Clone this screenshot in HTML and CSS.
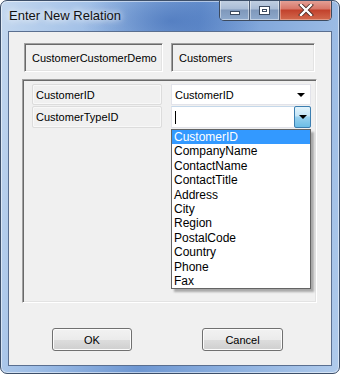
FILE: index.html
```html
<!DOCTYPE html>
<html>
<head>
    <meta charset="utf-8">
    <title>Enter New Relation</title>
    <link rel="stylesheet" href="styles.css">
</head>
<body>
    <div class="window">
        <div class="titlebar">
            <span class="title">Enter New Relation</span>
            <div class="caption-buttons">
                <div class="cap-btn cap-min"><span class="min-glyph"></span></div>
                <div class="cap-btn cap-max"><span class="max-glyph"></span></div>
                <div class="cap-btn cap-close">
                    <svg width="16" height="12" viewBox="0 0 16 12">
                        <path d="M3 1 L13 11 M13 1 L3 11" stroke="#4a2a24" stroke-width="4" stroke-linecap="square"/>
                        <path d="M3 1 L13 11 M13 1 L3 11" stroke="#fff" stroke-width="2.4" stroke-linecap="square"/>
                    </svg>
                </div>
            </div>
        </div>

        <div class="client">
            <!-- tabellen -->
            <div class="header">
                <div class="table-box box-left">CustomerCustomerDemo</div>
                <div class="table-box box-right">Customers</div>
            </div>

            <!-- kolommen -->
            <div class="panel">
                <div class="row">
                    <div class="cell-label">CustomerID</div>
                    <div class="combo">
                        <span>CustomerID</span>
                        <span class="arrow"></span>
                    </div>
                </div>
                <div class="row">
                    <div class="cell-label">CustomerTypeID</div>
                    <div class="combo combo-open">
                        <span class="caret"></span>
                        <span class="drop-btn"><span class="arrow"></span></span>
                    </div>
                </div>

                <ul class="dropdown">
                    <li class="selected">CustomerID</li>
                    <li>CompanyName</li>
                    <li>ContactName</li>
                    <li>ContactTitle</li>
                    <li>Address</li>
                    <li>City</li>
                    <li>Region</li>
                    <li>PostalCode</li>
                    <li>Country</li>
                    <li>Phone</li>
                    <li>Fax</li>
                </ul>
            </div>

            <div class="footer">
                <button class="btn btn-ok">OK</button>
                <button class="btn btn-cancel">Cancel</button>
            </div>
        </div>
    </div>
</body>
</html>
```

FILE: styles.css
```css
* {
    box-sizing: border-box;
}
body {
    margin: 0;
    width: 340px;
    height: 374px;
    background: #fff;
    font-family: "Liberation Sans", Arial, sans-serif;
    font-size: 11px;
    color: #000;
}
.window {
    width: 340px;
    height: 374px;
    display: flex;
    flex-direction: column;
    border: 1px solid #3d4f69;
    border-radius: 7px;
    background:
        radial-gradient(ellipse 90px 40px at 170px 20px, rgba(60, 105, 180, 0.6), rgba(60, 105, 180, 0)),
        linear-gradient(100deg, #c4d8ef 0%, #9dbde6 25%, #6e97d2 50%, #8fb2e0 75%, #b0cbec 100%);
    box-shadow: inset 0 0 0 1px rgba(255, 255, 255, 0.5);
    overflow: hidden;
}
.titlebar {
    height: 30px;
    display: flex;
    justify-content: space-between;
    align-items: flex-start;
    padding-left: 8px;
    padding-right: 7px;
}
.title {
    font-size: 13px;
    line-height: 13px;
    margin-top: 8px;
    color: #111;
    text-shadow: 0 0 6px #fff, 0 0 10px rgba(255, 255, 255, 0.8);
}
.caption-buttons {
    display: flex;
    height: 21px;
    margin-top: -1px;
    border: 1px solid #3c4a5e;
    border-top: none;
    border-radius: 0 0 5px 5px;
    overflow: hidden;
}
.cap-btn {
    height: 20px;
    display: flex;
    align-items: center;
    justify-content: center;
    border-right: 1px solid #4d5d75;
}
.cap-min, .cap-max {
    width: 30px;
    background: linear-gradient(#c2d0e2 0%, #a9bcd6 45%, #7f98bb 50%, #8ea9cc 100%);
    box-shadow: inset 0 0 0 1px rgba(255, 255, 255, 0.45);
}
.cap-close {
    width: 51px;
    border-right: none;
    background: linear-gradient(#e5a49a 0%, #d87668 45%, #c2412c 50%, #d26a4e 100%);
    box-shadow: inset 0 0 0 1px rgba(255, 220, 210, 0.4);
}
.min-glyph {
    width: 10px;
    height: 4px;
    margin-top: 6px;
    background: #fff;
    border: 1px solid #3b4a60;
}
.max-glyph {
    width: 11px;
    height: 9px;
    background: #fff;
    border: 1px solid #3b4a60;
    box-shadow: inset 0 0 0 2px #fff, inset 0 0 0 3px #3b4a60;
}
.client {
    flex: 1;
    margin: 0 7px 7px 7px;
    background: #f0f0f0;
    border: 1px solid #5a6f90;
    display: flex;
    flex-direction: column;
}
.header {
    display: flex;
    gap: 8px;
    margin-top: 11px;
    margin-left: 15px;
}
.table-box {
    height: 29px;
    display: flex;
    align-items: center;
    padding-left: 7px;
    border: 1px solid;
    border-color: #a0a0a0 #fff #fff #a0a0a0;
    box-shadow: inset 1px 1px 0 #696969, inset -1px -1px 0 #e3e3e3;
}
.box-left {
    width: 139px;
}
.box-right {
    width: 144px;
}
.panel {
    position: relative;
    width: 295px;
    height: 224px;
    margin-top: 7px;
    margin-left: 13px;
    padding: 4px 0 0 9px;
    border: 1px solid;
    border-color: #a0a0a0 #fff #fff #a0a0a0;
    box-shadow: inset 1px 1px 0 #696969, inset -1px -1px 0 #e3e3e3;
}
.row {
    display: flex;
    gap: 9px;
    height: 21px;
    margin-bottom: 1px;
}
.row + .row {
    height: 22px;
}
.cell-label {
    width: 130px;
    display: flex;
    align-items: center;
    padding-left: 3px;
    border: 1px solid #dcdcdc;
    border-radius: 2px;
    box-shadow: inset 0 0 0 1px #f8f8f8;
}
.combo {
    position: relative;
    width: 140px;
    display: flex;
    align-items: center;
    justify-content: space-between;
    padding-left: 3px;
    padding-right: 5px;
    background: #fff;
    border: 1px solid #e2e3ea;
}
.arrow {
    width: 0;
    height: 0;
    border-left: 4px solid transparent;
    border-right: 4px solid transparent;
    border-top: 4px solid #000;
}
.combo-open {
    padding-right: 0;
    border-color: #c5d8ea #e2e3ea #e2e3ea #e2e3ea;
}
.caret {
    width: 1px;
    height: 13px;
    background: #000;
}
.drop-btn {
    width: 17px;
    height: 22px;
    margin: -1px -1px -1px 0;
    display: flex;
    align-items: center;
    justify-content: center;
    background: linear-gradient(#e3f4fc 0%, #c4e5f6 45%, #98d1ef 50%, #6cbde6 100%);
    border: 1px solid #3c7fb1;
    border-radius: 2px;
}
.dropdown {
    position: absolute;
    left: 148px;
    top: 49px;
    width: 140px;
    margin: 0;
    padding: 0;
    list-style: none;
    background: #fff;
    border: 1px solid #646464;
    box-shadow: 3px 3px 2px rgba(0, 0, 0, 0.3);
}
.dropdown li {
    height: 14.4px;
    line-height: 14.4px;
    padding-left: 2px;
    font-size: 12px;
}
.dropdown li.selected {
    background: #3399ff;
    color: #fff;
}
.footer {
    display: flex;
    gap: 70px;
    margin-top: 25px;
    margin-left: 43px;
}
.btn {
    width: 80px;
    height: 23px;
    padding: 0;
    font-family: "Liberation Sans", Arial, sans-serif;
    font-size: 11px;
    color: #000;
    border: 1px solid #707070;
    border-radius: 3px;
    background: linear-gradient(#f2f2f2 0%, #ebebeb 50%, #dddddd 51%, #cfcfcf 100%);
    box-shadow: inset 0 0 0 1px #fcfcfc;
}
.btn-cancel {
    width: 81px;
}
```
